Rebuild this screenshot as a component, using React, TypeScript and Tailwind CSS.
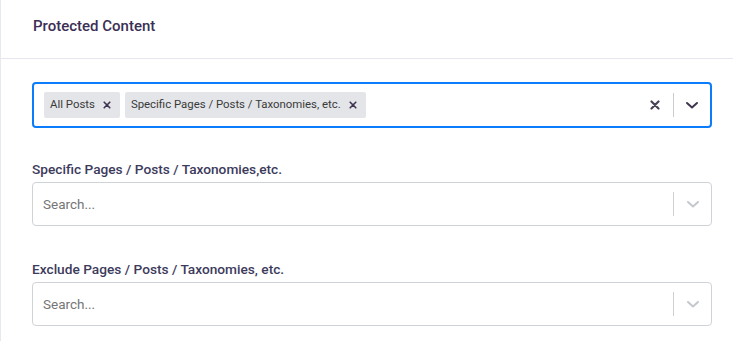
import React from "react";

const XIcon = ({ size = 8, color = "#3f3550", stroke = 2 }: { size?: number; color?: string; stroke?: number }) => (
  <svg width={size} height={size} viewBox="0 0 10 10" fill="none">
    <path d="M1.5 1.5 L8.5 8.5 M8.5 1.5 L1.5 8.5" stroke={color} strokeWidth={stroke} strokeLinecap="round" />
  </svg>
);

const Chevron = ({ color }: { color: string }) => (
  <svg width="14" height="9" viewBox="0 0 14 9" fill="none">
    <path d="M2 2 L7 6.5 L12 2" stroke={color} strokeWidth="2" strokeLinecap="round" strokeLinejoin="round" />
  </svg>
);

const Tag = ({ label }: { label: string }) => (
  <div className="flex h-[26px] items-center rounded-[2px] bg-[#e3e5e8] pl-[6px] pr-[9px] text-[11.4px] text-[#3a3a3a]">
    <span>{label}</span>
    <span className="ml-[8px] flex items-center">
      <XIcon size={8} />
    </span>
  </div>
);

const SearchSelect = () => (
  <div className="flex h-[44px] items-center rounded-[4px] border border-[#cfd3d8] bg-white">
    <div className="flex-1 pl-[10px] text-[13.5px] text-[#767676]">Search...</div>
    <div className="h-[24px] w-px bg-[#d0d0d0]" />
    <div className="flex w-[37px] items-center justify-center">
      <Chevron color="#c4c7cc" />
    </div>
  </div>
);

export default function App() {
  return (
    <div
      className="h-[341px] w-[733px] overflow-hidden border-l border-[#e8e9ef] bg-white"
      style={{ fontFamily: "'Segoe UI', Roboto, 'Noto Sans', sans-serif" }}
    >
      <div className="flex h-[59px] items-center border-b border-[#e6e7ee] pb-[5px] pl-[32px] text-[15px] font-medium text-[#3b2f55]">
        Protected Content
      </div>
      <div className="w-[711px] pl-[31px] pt-[23px]">
        <div className="flex h-[46px] items-center rounded-[4px] border-2 border-[#0b7dfc] bg-white pl-[10px]">
          <div className="flex flex-1 items-center gap-[5px]">
            <Tag label="All Posts" />
            <Tag label="Specific Pages / Posts / Taxonomies, etc." />
          </div>
          <div className="flex w-[36px] items-center justify-center">
            <XIcon size={10} color="#4a4256" stroke={2.2} />
          </div>
          <div className="h-[24px] w-px bg-[#cccccc]" />
          <div className="flex w-[36px] items-center justify-center">
            <Chevron color="#3f3550" />
          </div>
        </div>

        <div className="mt-[31px] mb-[3px] text-[13.7px] leading-[20px] font-medium text-[#3d3b5c]">
          Specific Pages / Posts / Taxonomies,etc.
        </div>
        <SearchSelect />

        <div className="mt-[33px] mb-[3px] text-[13.7px] leading-[20px] font-medium text-[#3d3b5c]">
          Exclude Pages / Posts / Taxonomies, etc.
        </div>
        <SearchSelect />
      </div>
    </div>
  );
}
